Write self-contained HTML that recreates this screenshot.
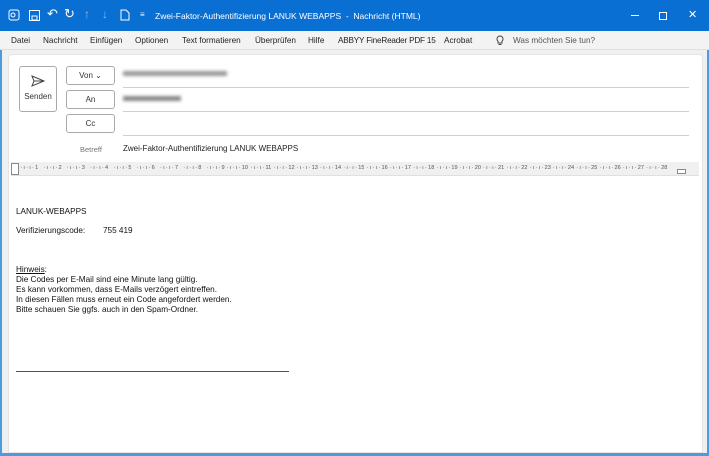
<!DOCTYPE html>
<html><head><meta charset="utf-8"><style>
*{margin:0;padding:0;box-sizing:border-box}
body{width:709px;height:456px;overflow:hidden;background:#f0f0f0;font-family:"Liberation Sans",sans-serif;position:relative}
.abs{position:absolute}
.tb{left:0;top:0;width:709px;height:31px;background:#0a6fd3;color:#fff}
.menu{left:0;top:31px;width:709px;height:19px;background:#f3f3f3;border-bottom:1px solid #e0e0e0;font-size:8.2px;color:#222}
.menu span{position:absolute;top:5px;white-space:nowrap}
.card{left:8px;top:54px;width:695px;height:399px;background:#fff;border:1px solid #e4e4e4;border-radius:4px 4px 0 0}
.btn{border:1px solid #aaa;border-radius:3px;background:#fff;font-size:8px;color:#333;text-align:center}
.line{height:1px;background:#d0d0d0}
.body{font-size:8.2px;color:#111;line-height:10px}
.ruler{display:flex;left:15px;top:165px;font-size:5.6px;color:#555}
.ruler div{width:23.3px;flex:none;text-align:right;white-space:nowrap;overflow:hidden;word-spacing:-0.3px}
</style></head><body>
<div class="abs tb">
 <svg class="abs" style="left:8px;top:9px" width="12" height="12" viewBox="0 0 12 12"><rect x="1" y="1" width="10" height="10" rx="2" fill="none" stroke="#fff"/><circle cx="5" cy="6" r="2" fill="none" stroke="#fff"/></svg>
 <svg class="abs" style="left:29px;top:10px" width="11" height="11" viewBox="0 0 11 11"><rect x=".5" y=".5" width="10" height="10" fill="none" stroke="#fff"/><rect x="3" y="6" width="5" height="4" fill="none" stroke="#fff"/></svg>
 <div class="abs" style="left:47px;top:6px;font-size:13px">↶</div>
 <div class="abs" style="left:64px;top:6px;font-size:13px">↻</div>
 <div class="abs" style="left:84px;top:7px;font-size:12px;opacity:.5">↑</div>
 <div class="abs" style="left:102px;top:7px;font-size:12px;opacity:.5">↓</div>
 <svg class="abs" style="left:120px;top:9px" width="10" height="12" viewBox="0 0 10 12"><path d="M1 1h5l3 3v7H1z" fill="none" stroke="#fff"/></svg>
 <div class="abs" style="left:140px;top:10px;font-size:8px">≡</div>
 <div class="abs" style="left:155px;top:11px;font-size:8.5px">Zwei-Faktor-Authentifizierung LANUK WEBAPPS &nbsp;- &nbsp;Nachricht (HTML)</div>
 <div class="abs" style="left:631px;top:15px;width:8px;height:1px;background:#fff"></div>
 <div class="abs" style="left:659px;top:12px;width:8px;height:8px;border:1px solid #fff"></div>
 <div class="abs" style="left:688px;top:8px;font-size:11px">✕</div>
</div>
<div class="abs menu">
 <span style="left:11px">Datei</span><span style="left:43px">Nachricht</span><span style="left:90px">Einfügen</span><span style="left:135px">Optionen</span><span style="left:182px">Text formatieren</span><span style="left:255px">Überprüfen</span><span style="left:308px">Hilfe</span><span style="left:338px;letter-spacing:-.2px">ABBYY FineReader PDF 15</span><span style="left:444px">Acrobat</span>
 <svg class="abs" style="left:496px;top:4px" width="8" height="11" viewBox="0 0 8 11"><path d="M4 1a3 3 0 0 0-2 5.2V8h4V6.2A3 3 0 0 0 4 1zM2.5 9.5h3" fill="none" stroke="#444"/></svg><span style="left:513px;color:#555">Was möchten Sie tun?</span>
</div>
<div class="abs card"></div>
<div class="abs" style="left:0;top:50px;width:2px;height:406px;background:#4a9be0"></div>
<div class="abs" style="left:707px;top:50px;width:2px;height:406px;background:#4a9be0"></div>
<div class="abs" style="left:0;top:453px;width:709px;height:3px;background:#4a9be0"></div>
<div class="abs btn" style="left:19px;top:66px;width:38px;height:46px">
 <svg style="margin-top:8px" width="14" height="12" viewBox="0 0 14 12"><path d="M1 1l12 5-12 5 2-5z M3 6h10" fill="none" stroke="#444"/></svg>
 <div style="margin-top:3px">Senden</div></div>
<div class="abs btn" style="left:66px;top:66px;width:49px;height:19px;line-height:17px">Von ⌄</div>
<div class="abs btn" style="left:66px;top:90px;width:49px;height:19px;line-height:17px">An</div>
<div class="abs btn" style="left:66px;top:114px;width:49px;height:19px;line-height:17px">Cc</div>
<div class="abs" style="left:123px;top:71px;width:104px;height:5px;background:#9a9a9a;filter:blur(1.5px)"></div>
<div class="abs" style="left:123px;top:96px;width:58px;height:5px;background:#888;filter:blur(1.5px)"></div>
<div class="abs line" style="left:123px;top:87px;width:566px"></div>
<div class="abs line" style="left:123px;top:111px;width:566px"></div>
<div class="abs line" style="left:123px;top:135px;width:566px"></div>
<div class="abs" style="left:80px;top:145px;font-size:7.5px;color:#777">Betreff</div>
<div class="abs" style="left:123px;top:144px;font-size:8px;color:#222">Zwei-Faktor-Authentifizierung LANUK WEBAPPS</div>
<div class="abs" style="left:11px;top:162px;width:688px;height:14px;background:#f0f0f0;border-bottom:1px solid #e0e0e0"></div>
<div class="abs ruler">
<div>· ı · ı · 1</div><div>· ı · ı · 2</div><div>· ı · ı · 3</div><div>· ı · ı · 4</div><div>· ı · ı · 5</div><div>· ı · ı · 6</div><div>· ı · ı · 7</div><div>· ı · ı · 8</div><div>· ı · ı · 9</div><div>· ı · ı · 10</div><div>· ı · ı · 11</div><div>· ı · ı · 12</div><div>· ı · ı · 13</div><div>· ı · ı · 14</div><div>· ı · ı · 15</div><div>· ı · ı · 16</div><div>· ı · ı · 17</div><div>· ı · ı · 18</div><div>· ı · ı · 19</div><div>· ı · ı · 20</div><div>· ı · ı · 21</div><div>· ı · ı · 22</div><div>· ı · ı · 23</div><div>· ı · ı · 24</div><div>· ı · ı · 25</div><div>· ı · ı · 26</div><div>· ı · ı · 27</div><div>· ı · ı · 28</div>
</div>
<div class="abs" style="left:11px;top:163px;width:8px;height:12px;border:1px solid #888;background:#fff"></div>
<div class="abs" style="left:677px;top:169px;width:9px;height:5px;border:1px solid #888;background:#fff"></div>
<div class="abs body" style="left:16px;top:207px">LANUK-WEBAPPS</div>
<div class="abs body" style="left:16px;top:226px">Verifizierungscode:</div>
<div class="abs body" style="left:103px;top:226px">755 419</div>
<div class="abs body" style="left:16px;top:265px"><u>Hinweis</u>:<br>Die Codes per E-Mail sind eine Minute lang gültig.<br>Es kann vorkommen, dass E-Mails verzögert eintreffen.<br>In diesen Fällen muss erneut ein Code angefordert werden.<br>Bitte schauen Sie ggfs. auch in den Spam-Ordner.</div>
<div class="abs" style="left:16px;top:371px;width:273px;height:1px;background:#555"></div>
</body></html>
